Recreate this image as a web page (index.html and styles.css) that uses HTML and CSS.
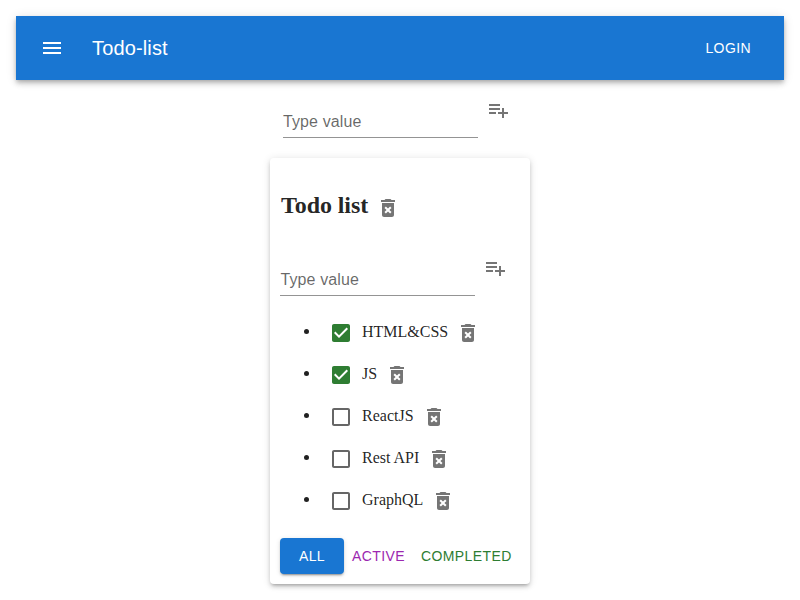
FILE: index.html
```html
<!DOCTYPE html>
<html lang="en">
<head>
<meta charset="utf-8">
<title>Todo-list</title>
<link rel="stylesheet" href="styles.css">
</head>
<body>
<svg class="defs" width="0" height="0">
  <symbol id="add" viewBox="0 0 24 24"><path d="M14 10H3v2h11v-2zm0-4H3v2h11V6zm4 8v-4h-2v4h-4v2h4v4h2v-4h4v-2h-4zM3 16h7v-2H3v2z"/></symbol>
  <symbol id="del" viewBox="0 0 24 24"><path d="M6 19c0 1.100.9 2 2 2h8c1.100 0 2-.9 2-2V7H6v12zm2.460-7.120 1.410-1.410L12 12.590l2.120-2.120 1.410 1.410L13.410 14l2.120 2.120-1.410 1.410L12 15.410l-2.120 2.120-1.410-1.410L10.590 14l-2.130-2.120zM15.500 4l-1-1h-5l-1 1H5v2h14V4z"/></symbol>
  <symbol id="on" viewBox="0 0 24 24"><path d="M19 3H5c-1.110 0-2 .9-2 2v14c0 1.100.89 2 2 2h14c1.110 0 2-.9 2-2V5c0-1.100-.89-2-2-2zm-9 14l-5-5 1.410-1.410L10 14.170l7.590-7.590L19 8l-9 9z"/></symbol>
  <symbol id="off" viewBox="0 0 24 24"><path d="M19 5v14H5V5h14m0-2H5c-1.100 0-2 .9-2 2v14c0 1.100.9 2 2 2h14c1.100 0 2-.9 2-2V5c0-1.100-.9-2-2-2z"/></symbol>
</svg>
<header class="bar">
  <svg class="icon menu" viewBox="0 0 24 24"><path d="M3 18h18v-2H3v2zm0-5h18v-2H3v2zm0-7v2h18V6H3z"/></svg>
  <span class="title">Todo-list</span>
  <span class="login">LOGIN</span>
</header>
<main>
  <div class="entry top"><div class="field">Type value</div><svg class="icon"><use href="#add"/></svg></div>
  <section class="card">
    <h2><span>Todo list</span><svg class="icon"><use href="#del"/></svg></h2>
    <div class="entry inner"><div class="field">Type value</div><svg class="icon"><use href="#add"/></svg></div>
    <ul>
      <li><svg class="icon check"><use href="#on"/></svg><span>HTML&amp;CSS</span><svg class="icon"><use href="#del"/></svg></li>
      <li><svg class="icon check"><use href="#on"/></svg><span>JS</span><svg class="icon"><use href="#del"/></svg></li>
      <li><svg class="icon box"><use href="#off"/></svg><span>ReactJS</span><svg class="icon"><use href="#del"/></svg></li>
      <li><svg class="icon box"><use href="#off"/></svg><span>Rest API</span><svg class="icon"><use href="#del"/></svg></li>
      <li><svg class="icon box"><use href="#off"/></svg><span>GraphQL</span><svg class="icon"><use href="#del"/></svg></li>
    </ul>
    <div class="filters"><span class="btn all">ALL</span><span class="btn active">ACTIVE</span><span class="btn completed">COMPLETED</span></div>
  </section>
</main>
</body>
</html>
```
FILE: styles.css
```css
* { box-sizing: border-box; }
body { min-height: 600px; margin: 0; padding: 16px; background: #fff; color: rgba(0,0,0,.87); font-family: "Liberation Serif", serif; }
.defs { display: none; }
.icon { width: 24px; height: 24px; flex: none; fill: currentColor; color: rgba(0,0,0,.54); }
.bar {
  display: flex; align-items: center; height: 64px; padding: 0 33px 0 24px;
  color: #fff; background: #1976d2; font-family: "Liberation Sans", sans-serif;
  box-shadow: 0 2px 4px -1px rgba(0,0,0,.2), 0 4px 5px rgba(0,0,0,.14), 0 1px 10px rgba(0,0,0,.12);
}
.menu { color: #fff; }
.title { flex: 1; margin-left: 28px; font-size: 20px; letter-spacing: .15px; }
.login { font-size: 14px; letter-spacing: .4px; }
main { width: 260px; margin: 0 auto; }
.entry { display: flex; height: 48px; font-family: "Liberation Sans", sans-serif; }
.entry .icon { margin: 8px 0 0 8px; }
.top { margin: 10px 0 20px 13px; }
.field { width: 195px; height: 48px; padding-top: 20px; font-size: 16px; line-height: 23px; letter-spacing: .1px; color: rgba(0,0,0,.6); border-bottom: 1px solid rgba(0,0,0,.42); }
.inner .field { padding-left: .5px; }
.card { height: 426px; padding: 31px 10px 0; border-radius: 4px; box-shadow: 0 3px 3px -2px rgba(0,0,0,.2), 0 3px 4px rgba(0,0,0,.14), 0 1px 8px rgba(0,0,0,.12); }
h2 { display: flex; align-items: center; height: 32px; margin: 0 0 27px 1px; font-size: 24px; line-height: 32px; letter-spacing: -.08px; }
h2 .icon { margin: 5px 0 0 7.7px; }
ul { margin: 15px 0 0; padding: 0 0 0 49px; list-style: none; }
li { position: relative; display: flex; align-items: center; height: 42px; font-size: 16px; }
li::before { content: ""; position: absolute; left: -25px; top: 18px; width: 5px; height: 5px; border-radius: 50%; background: rgba(0,0,0,.87); }
li span { margin: 0 8px 0 9px; }
li .icon { margin-top: 2px; }
.check { color: #2e7d32; }
.box { color: rgba(0,0,0,.6); }
.filters { display: flex; font: 14px "Liberation Sans", sans-serif; margin-top: 17px; }
.btn { height: 36px; padding: 0 8px; line-height: 36px; letter-spacing: .4px; }
.all { width: 64px; padding: 0; text-align: center; color: #fff; background: #1976d2; border-radius: 4px; box-shadow: 0 3px 1px -2px rgba(0,0,0,.2), 0 2px 2px rgba(0,0,0,.14), 0 1px 5px rgba(0,0,0,.12); }
.active { color: #9c27b0; }
.completed { color: #2e7d32; }
```
